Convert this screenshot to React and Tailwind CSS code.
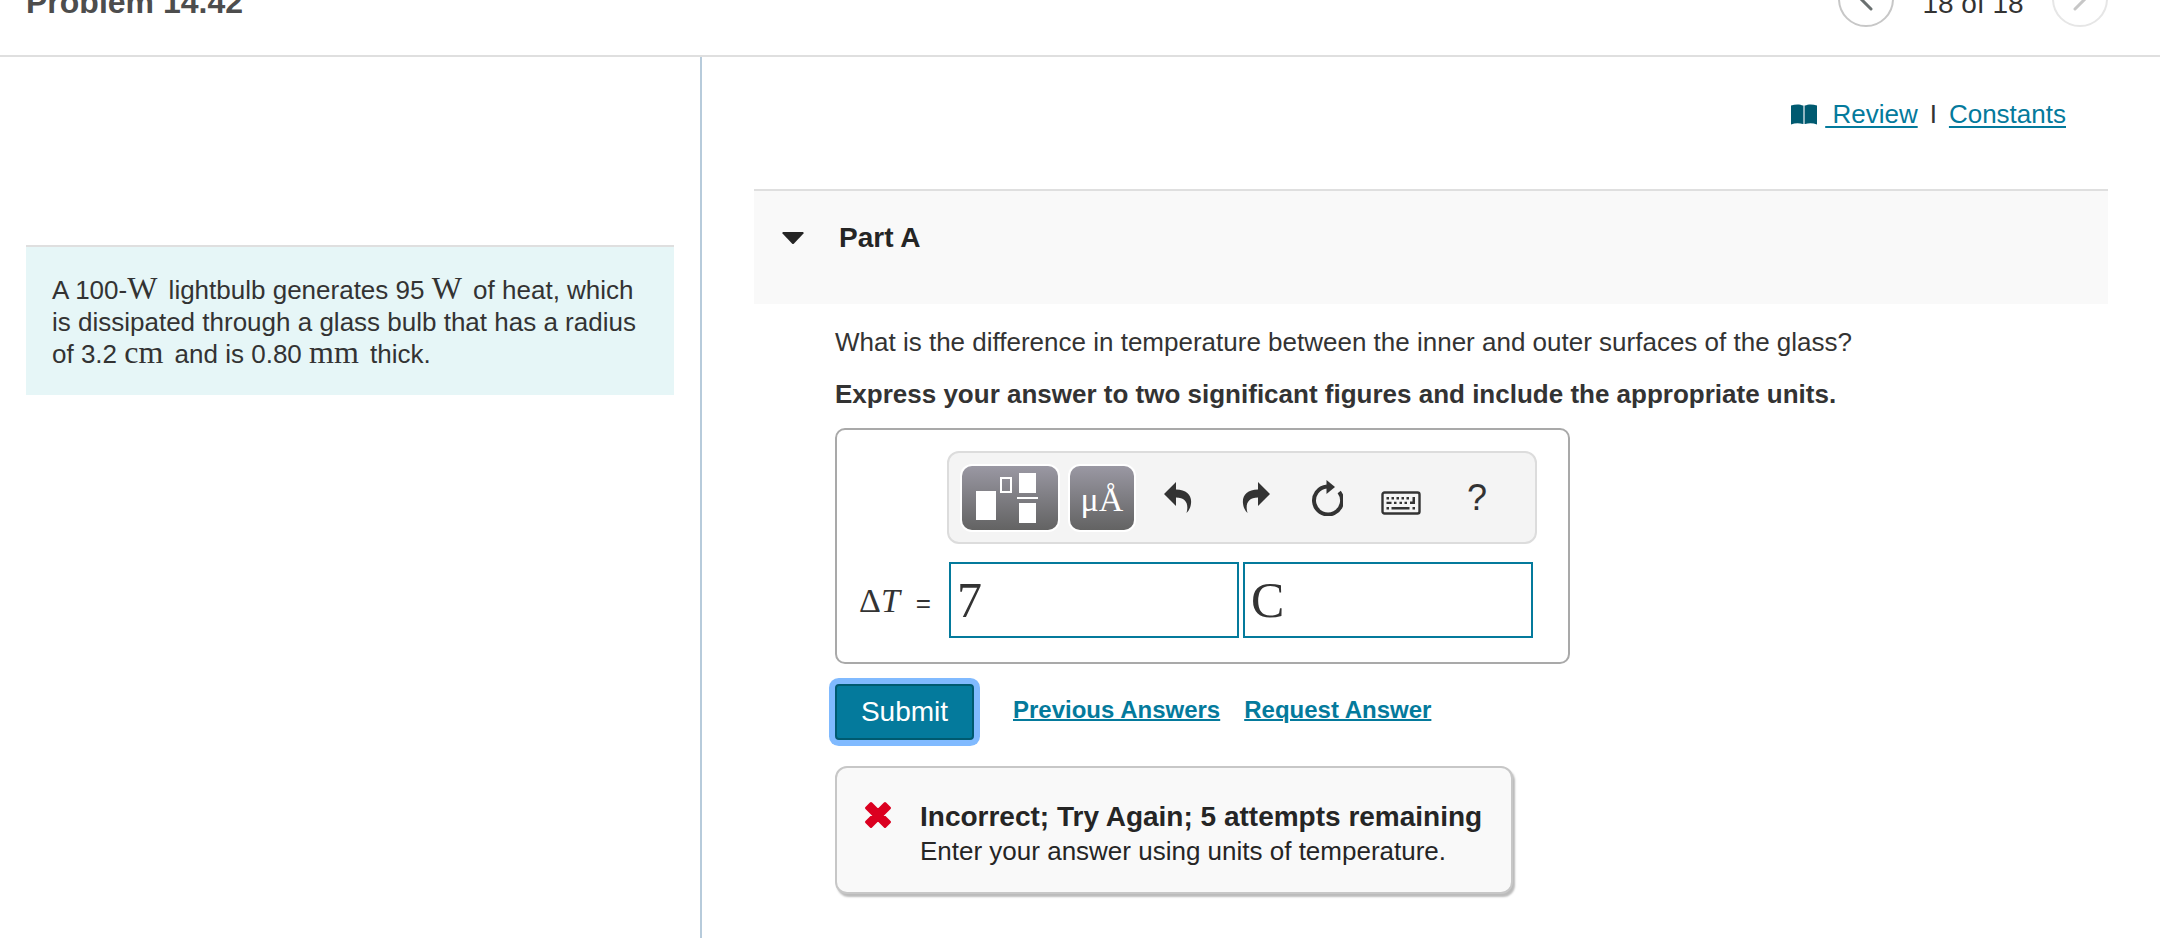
import React from 'react';

const PrevIcon = () => (
  <svg className="w-6 h-6" viewBox="0 0 24 24" fill="none" stroke="currentColor" strokeWidth={3} strokeLinecap="round">
    <path d="M17 2L7 12l10 10" />
  </svg>
);

const NextIcon = () => (
  <svg className="w-6 h-6" viewBox="0 0 24 24" fill="none" stroke="currentColor" strokeWidth={3} strokeLinecap="round">
    <path d="M7 2l10 10L7 22" />
  </svg>
);

const BookIcon = () => (
  <svg className="w-[26px] h-[21px]" viewBox="0 0 26 21">
    <path d="M0 1.500C4 0 9 0 12 1.500V20C8 19 4 19 0 20.500zM26 1.500C22 0 17 0 14 1.500V20c4-1 8-1 12 .5z" fill="#005a70" />
    <path d="M12 1.500h2V20h-2z" fill="#8fb5c0" />
  </svg>
);

const UndoIcon = () => (
  <svg className="w-7 h-8" viewBox="0 0 28 32" fill="currentColor">
    <path d="M0 12L12 0v7.500c11 0 16 6 15 14-.4 4-2 7-4.500 9.500C25 22 22 15.500 12 15.500V24z" />
  </svg>
);

const RedoIcon = () => (
  <svg className="w-7 h-8" viewBox="0 0 28 32" fill="currentColor">
    <path d="M28 12L16 0v7.500C5 7.500 0 13.500 1 21.500c.4 4 2 7 4.500 9.500C3 22 6 15.500 16 15.500V24z" />
  </svg>
);

const ResetIcon = () => (
  <svg className="w-8 h-9" viewBox="0 0 32 36">
    <path d="M16 6.500A14 14 0 1 0 28.200 12" fill="none" stroke="currentColor" strokeWidth={4} />
    <path d="M15.500 0l8.500 7-8.500 7z" fill="currentColor" />
  </svg>
);

const KeyboardIcon = () => (
  <svg className="w-10 h-6" viewBox="0 0 40 24">
    <rect x="1.500" y="1.500" width="37" height="21" rx="2" fill="none" stroke="currentColor" strokeWidth={2.4} />
    <path
      d="M5.500 6H8v2.500H5.500zM10.500 6H13v2.500h-2.500zM15.500 6H18v2.500h-2.500zM20.500 6H23v2.500h-2.500zM25.500 6H28v2.500h-2.500zM31.500 6H34v7h-5v-2.500h2.500zM5.500 10.800h5v2.200h-5zM13 10.800h2.500V13H13zM18.500 10.800H21V13h-2.500zM23.500 10.800H26V13h-2.500zM5.500 16H8v2.500H5.500zM10.500 16h18v2.500h-18zM31.500 16H34v2.500h-2.500z"
      fill="currentColor"
    />
  </svg>
);

const TemplateIcon = () => (
  <svg className="mr-1.5 h-[50px] w-[62px]" viewBox="0 0 62 50" fill="#fff">
    <path d="M0 18h20v29H0zM43 0h17v20H43zM41 24h21v2H41zM43 30h17v20H43z" />
    <rect x="25" y="5" width="10" height="14" fill="none" stroke="#fff" strokeWidth={2} />
  </svg>
);

const WrongIcon = () => (
  <svg className="w-7 h-7" viewBox="0 0 28 28">
    <path
      d="M7 2.500l7 7 7-7L25.500 7l-7 7 7 7-4.500 4.500-7-7-7 7L2.500 21l7-7-7-7z"
      fill="#db0020"
      stroke="#db0020"
      strokeWidth={3}
      strokeLinejoin="round"
    />
  </svg>
);

const Unit = ({ children }) => (
  <span className="mr-1 font-['Liberation_Serif',serif] text-[32px] leading-5">{children}</span>
);

const Header = () => {
  return (
    <header className="h-[57px] overflow-hidden border-b-2 border-[#dfdfdf]">
      <div className="-mt-[29px] flex h-14 items-center justify-between pl-[26px] pr-[52px]">
        <h1 className="pt-1.5 text-[32px] font-bold text-[#4d4d4d]">Problem 14.42</h1>
        <div className="flex items-center">
          <button aria-label="Previous item" className="flex h-14 w-14 items-center justify-center rounded-full border-2 border-[#c7c7c7] text-[#6a7070]">
            <PrevIcon />
          </button>
          <span className="w-[158px] pt-2.5 text-center text-[28px]">18 of 18</span>
          <button aria-label="Next item" disabled className="flex h-14 w-14 items-center justify-center rounded-full border-2 border-[#e6e6e6] text-[#c7c7c7]">
            <NextIcon />
          </button>
        </div>
      </div>
    </header>
  );
};

const Problem = () => {
  return (
    <aside className="w-[702px] shrink-0 border-r-2 border-[#b7cbdb] pl-[26px] pr-[26px] pt-[188px]">
      <div className="border-t-2 border-[#dfdfdf] bg-[#e6f6f7] px-[26px] pb-[25px] pt-[27px]">
        <p className="text-[26px] leading-8">
          A 100-<Unit>W</Unit> lightbulb generates 95 <Unit>W</Unit> of heat, which is dissipated through a glass bulb
          that has a radius of 3.2 <Unit>cm</Unit> and is 0.80 <Unit>mm</Unit> thick.
        </p>
      </div>
    </aside>
  );
};

const toolButton = 'flex h-16 items-center justify-center rounded-[10px] bg-linear-to-b from-[#9a98a3] to-[#636363] text-white shadow-[0_0_0_2px_#fff]';

const AnswerBox = () => {
  return (
    <div className="mt-4 w-[735px] rounded-[10px] border-2 border-[#a9a9a9] pb-6 pt-[21px]">
      <div className="ml-[110px] flex h-[93px] w-[590px] items-center rounded-xl border-2 border-[#dcdcdc] bg-[#f4f4f4] pl-[13px]">
        <button aria-label="Templates" className={`${toolButton} w-24`}>
          <TemplateIcon />
        </button>
        <button aria-label="Units" className={`${toolButton} ml-3 w-16 pt-1 font-['Liberation_Serif',serif] text-[34px]`}>
          μÅ
        </button>
        <div className="ml-[30px] flex items-center text-[#333]">
          <button aria-label="Undo" className="mr-[50px]"><UndoIcon /></button>
          <button aria-label="Redo" className="mr-[41px]"><RedoIcon /></button>
          <button aria-label="Reset" className="mr-[38px]"><ResetIcon /></button>
          <button aria-label="Keyboard" className="mr-[46px] pt-2.5"><KeyboardIcon /></button>
          <button aria-label="Help" className="text-[36px]">?</button>
        </div>
      </div>
      <div className="mt-[18px] flex items-center">
        <label htmlFor="value" className="flex w-28 items-baseline gap-4 pl-[22px] text-[26px]">
          <span className="font-['Liberation_Serif',serif] text-[34px]">Δ<i>T</i></span>
          =
        </label>
        <input id="value" defaultValue="7" className="h-[76px] w-[290px] border-2 border-[#047a9c] px-1.5 font-['Liberation_Serif',serif] text-[50px]" />
        <input aria-label="Units" defaultValue="C" className="ml-1 h-[76px] w-[290px] border-2 border-[#047a9c] px-1.5 font-['Liberation_Serif',serif] text-[50px]" />
      </div>
    </div>
  );
};

const Feedback = () => {
  return (
    <div className="mt-[26px] flex w-[678px] rounded-xl border-2 border-[#c7c7c7] bg-[#f9f9f9] pb-[23px] pl-[27px] pt-[33px] shadow-[2px_3px_2px_#bbb]">
      <WrongIcon />
      <div className="ml-7 text-[#252525]">
        <p className="text-[28px] font-bold leading-8">Incorrect; Try Again; 5 attempts remaining</p>
        <p className="text-[26px] leading-9">Enter your answer using units of temperature.</p>
      </div>
    </div>
  );
};

const App = () => {
  return (
    <div className="flex min-h-screen flex-col bg-white font-['Liberation_Sans',Arial,sans-serif] text-[#333]">
      <Header />
      <div className="flex grow">
        <Problem />
        <main className="grow pl-[52px] pr-[52px]">
          <div className="flex items-center justify-end pr-[42px] pt-[41px] text-[26px] leading-8">
            <BookIcon />
            <a href="#review" className="ml-2 whitespace-pre text-[#047a9c] underline decoration-2 underline-offset-3"> Review</a>
            <span className="mx-3">I</span>
            <a href="#constants" className="text-[#047a9c] underline decoration-2 underline-offset-3">Constants</a>
          </div>

          <section>
            <div className="mt-[59px] flex h-[115px] items-start border-t-2 border-[#dfdfdf] bg-[#f9f9f9] pl-7 pt-[31px]">
              <button aria-expanded="true" className="flex items-center text-[28px] font-bold leading-8 text-[#252525]">
                <svg className="mr-[35px] h-3 w-[22px]" viewBox="0 0 22 12">
                  <path d="M1 0h20q1 .5.5 1.500L12 11.500q-1 1-2 0L.5 1.500Q0 .5 1 0z" fill="currentColor" />
                </svg>
                Part A
              </button>
            </div>

            <div className="pl-[81px] pt-5">
              <p className="text-[26px] leading-9">What is the difference in temperature between the inner and outer surfaces of the glass?</p>
              <p className="mt-4 text-[26px] font-bold leading-9">Express your answer to two significant figures and include the appropriate units.</p>
              <AnswerBox />
              <div className="mt-5 flex items-center">
                <button className="h-14 w-[139px] rounded border-2 border-[#005a70] bg-[#047a9c] text-[28px] text-white shadow-[0_0_0_6px_#80baff]">
                  Submit
                </button>
                <a href="#previous" className="ml-[39px] pb-1 text-2xl font-bold text-[#047a9c] underline decoration-2">Previous Answers</a>
                <a href="#request" className="ml-6 pb-1 text-2xl font-bold text-[#047a9c] underline decoration-2">Request Answer</a>
              </div>
              <Feedback />
            </div>
          </section>
        </main>
      </div>
    </div>
  );
};

export default App;
